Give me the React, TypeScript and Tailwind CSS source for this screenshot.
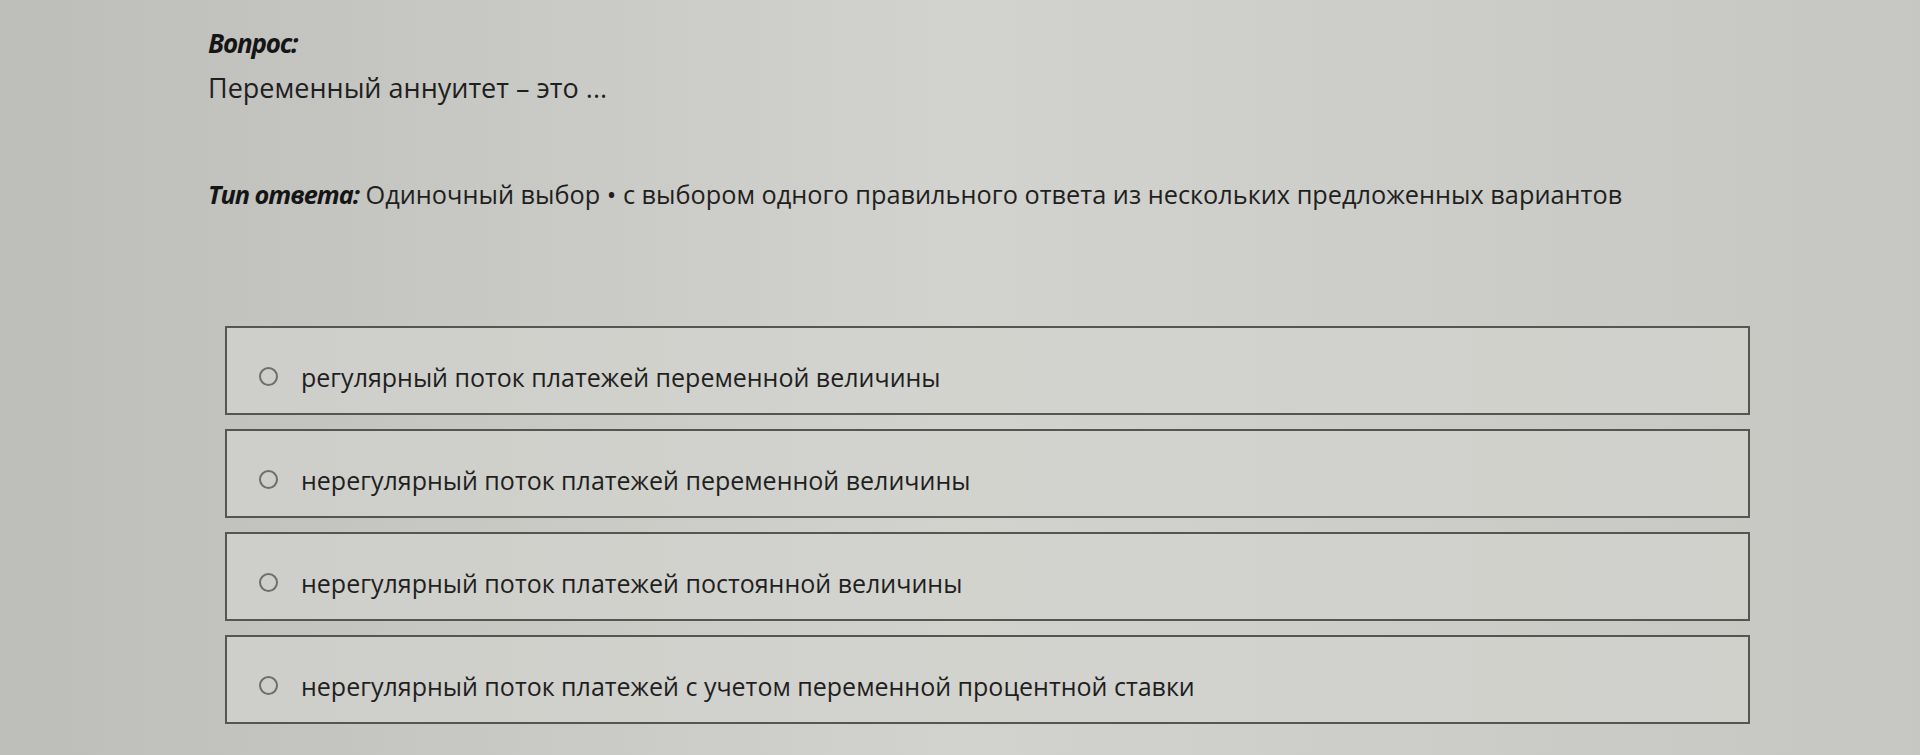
const options = [
  "регулярный поток платежей переменной величины",
  "нерегулярный поток платежей переменной величины",
  "нерегулярный поток платежей постоянной величины",
  "нерегулярный поток платежей с учетом переменной процентной ставки",
]

const Radio = () => (
  <span className="block w-[19px] h-[19px] rounded-full border-2 border-[#6e6e6c] shrink-0" />
)

export default function App() {
  return (
    <div
      className="min-h-screen w-full bg-gradient-to-r from-[#bdbdb9] via-[#d2d2ce] to-[#c6c6c2] text-[#1f1f1f] pl-[208px] pt-[25px] pb-[30px]"
      style={{ fontFamily: '"Open Sans", "Noto Sans", sans-serif' }}
    >
      <div className="text-[26px] leading-[36px] font-bold italic tracking-[-1.2px] text-[#151515]">
        Вопрос:
      </div>
      <div className="mt-[7px] text-[27px] leading-[40px]">Переменный аннуитет – это ...</div>

      <div className="mt-[66px] text-[25.3px] leading-[40px]">
        <span className="font-bold italic tracking-[-1px] text-[#151515]">Тип ответа:</span>{" "}
        Одиночный выбор • с выбором одного правильного ответа из нескольких предложенных вариантов
      </div>

      <div className="mt-[112px] ml-[17px] w-[1525px] flex flex-col gap-[14px]">
        {options.map((option) => (
          <label
            key={option}
            className="h-[89px] flex items-center pt-[12px] pl-[32px] gap-[23px] border-2 border-[#555552] bg-[#d3d3cf]/70 cursor-pointer"
          >
            <Radio />
            <span className="text-[25px] leading-[36px]">{option}</span>
          </label>
        ))}
      </div>
    </div>
  )
}
